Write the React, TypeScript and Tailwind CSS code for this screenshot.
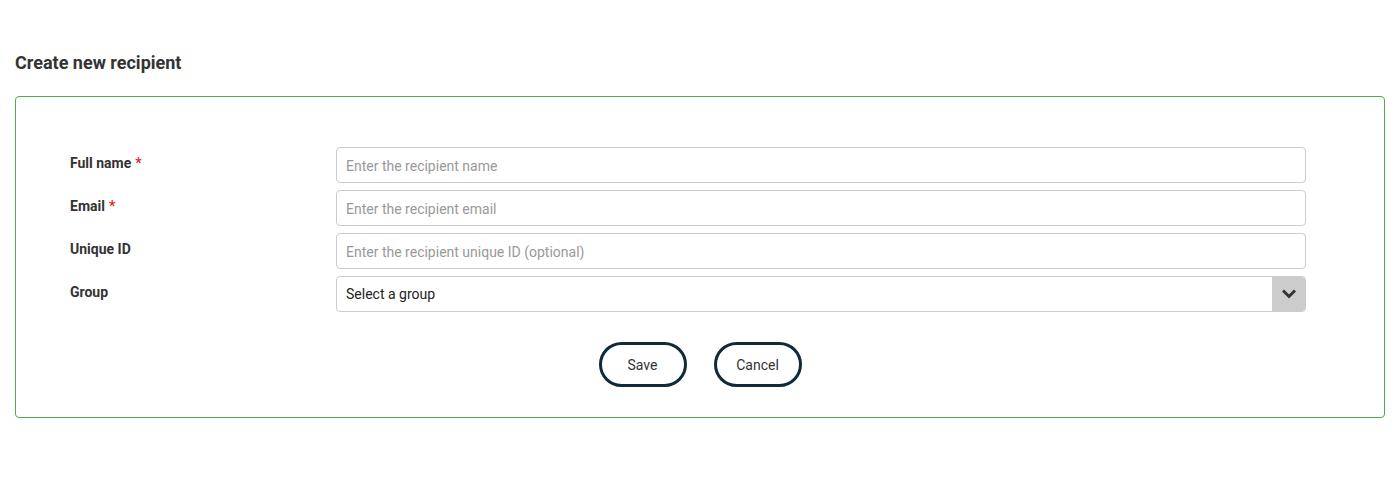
import React from 'react';

const fields = [
  { label: 'Full name', required: true, placeholder: 'Enter the recipient name' },
  { label: 'Email', required: true, placeholder: 'Enter the recipient email' },
  { label: 'Unique ID', required: false, placeholder: 'Enter the recipient unique ID (optional)' },
];

const Chevron = () => (
  <svg width="14" height="10" viewBox="0 0 14 10" fill="none">
    <path d="M2 2.5 L7 7.5 L12 2.5" stroke="#333" strokeWidth="3" strokeLinecap="square" />
  </svg>
);

export default function App() {
  return (
    <div className="min-h-[481px] bg-white px-[15px] pt-[51px] text-[#333]" style={{ fontFamily: 'Roboto, "Liberation Sans", sans-serif' }}>
      <h1 className="text-[18px] font-bold leading-[24px] text-[#333]">Create new recipient</h1>

      <div className="mt-[21px] w-[1370px] rounded-[4px] border border-[#4cae4c] pt-[50px] pb-[30px]">
        <div className="flex flex-col gap-[7px] pl-[54px]">
          {fields.map((f) => (
            <div key={f.label} className="flex">
              <label className="w-[266px] pt-[6px] text-[14px] font-bold leading-[21px] text-[#333]">
                {f.label}
                {f.required && <span className="ml-[4px] text-[#d9302c]">*</span>}
              </label>
              <input
                type="text"
                placeholder={f.placeholder}
                className="h-[36px] w-[970px] rounded-[4px] border border-[#ccc] pl-[9px] pt-[1px] text-[14px] text-[#333] outline-none placeholder:text-[#999]"
              />
            </div>
          ))}
          <div className="flex">
            <label className="w-[266px] pt-[6px] text-[14px] font-bold leading-[21px] text-[#333]">Group</label>
            <div className="flex h-[36px] w-[970px] overflow-hidden rounded-[4px] border border-[#ccc]">
              <div className="flex flex-1 items-center pl-[9px] pt-[1px] text-[14px] text-[#222]">Select a group</div>
              <div className="flex w-[33px] items-center justify-center bg-[#ccc]">
                <Chevron />
              </div>
            </div>
          </div>
        </div>

        <div className="mt-[30px] flex justify-center gap-[27px]">
          <button className="h-[45px] w-[88px] rounded-full border-[3px] border-[#0f2a3b] bg-white pt-[1px] text-[14px] text-[#333]">Save</button>
          <button className="h-[45px] w-[88px] rounded-full border-[3px] border-[#0f2a3b] bg-white pt-[1px] text-[14px] text-[#333]">Cancel</button>
        </div>
      </div>
    </div>
  );
}
